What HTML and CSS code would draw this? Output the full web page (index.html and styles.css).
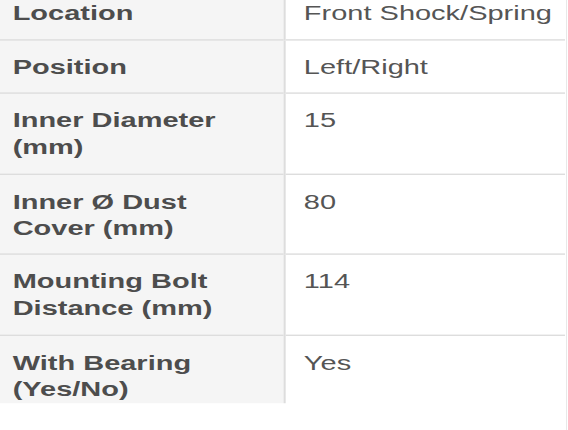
FILE: index.html
```html
<!DOCTYPE html>
<html lang="en">
<head>
<meta charset="utf-8">
<title>Specifications</title>
<link rel="stylesheet" href="styles.css">
</head>
<body>
<div class="page">
  <div class="stretch">
    <div class="viewport">
      <table class="spec">
        <colgroup><col class="col-label"><col class="col-value"></colgroup>
        <tbody>
          <tr><th>Location</th><td>Front Shock/Spring</td></tr>
          <tr><th>Position</th><td>Left/Right</td></tr>
          <tr><th>Inner Diameter (mm)</th><td>15</td></tr>
          <tr><th>Inner Ø Dust Cover (mm)</th><td>80</td></tr>
          <tr><th>Mounting Bolt Distance (mm)</th><td>114</td></tr>
          <tr><th>With Bearing (Yes/No)</th><td>Yes</td></tr>
        </tbody>
      </table>
    </div>
  </div>
</div>
</body>
</html>
```
FILE: styles.css
```css
html, body {
  margin: 0;
  padding: 0;
  background: #ffffff;
}

body {
  font-family: "Liberation Sans", Arial, sans-serif;
}

.page {
  width: 566px;
  height: 430px;
  border-right: 1px solid #e8e8e8;
  overflow: hidden;
}

.stretch {
  transform: scale(2.07, 1.4);
  transform-origin: 0 0;
  width: 273.4px;
}

.viewport {
  width: 275.7px;
  height: 288px;
  margin-left: -2.9px;
  overflow: hidden;
}

.spec {
  width: 275.7px;
  margin-top: -10.4px;
  border-collapse: collapse;
  table-layout: fixed;
  font-size: 14px;
  line-height: 19.3px;
  color: #555555;
}

.col-label {
  width: 140.2px;
}

.col-value {
  width: 135.5px;
}

.spec tr {
  border-top: 1px solid #dddddd;
}

.spec th,
.spec td {
  vertical-align: top;
  text-align: left;
  padding: 9.8px 12px 8.2px 9px;
}

.spec th {
  font-weight: bold;
  color: #4d4d4d;
  background: #f5f5f5;
  border-right: 1px solid #dddddd;
}

.spec td {
  padding-left: 9px;
  padding-right: 0;
  white-space: nowrap;
}
```
